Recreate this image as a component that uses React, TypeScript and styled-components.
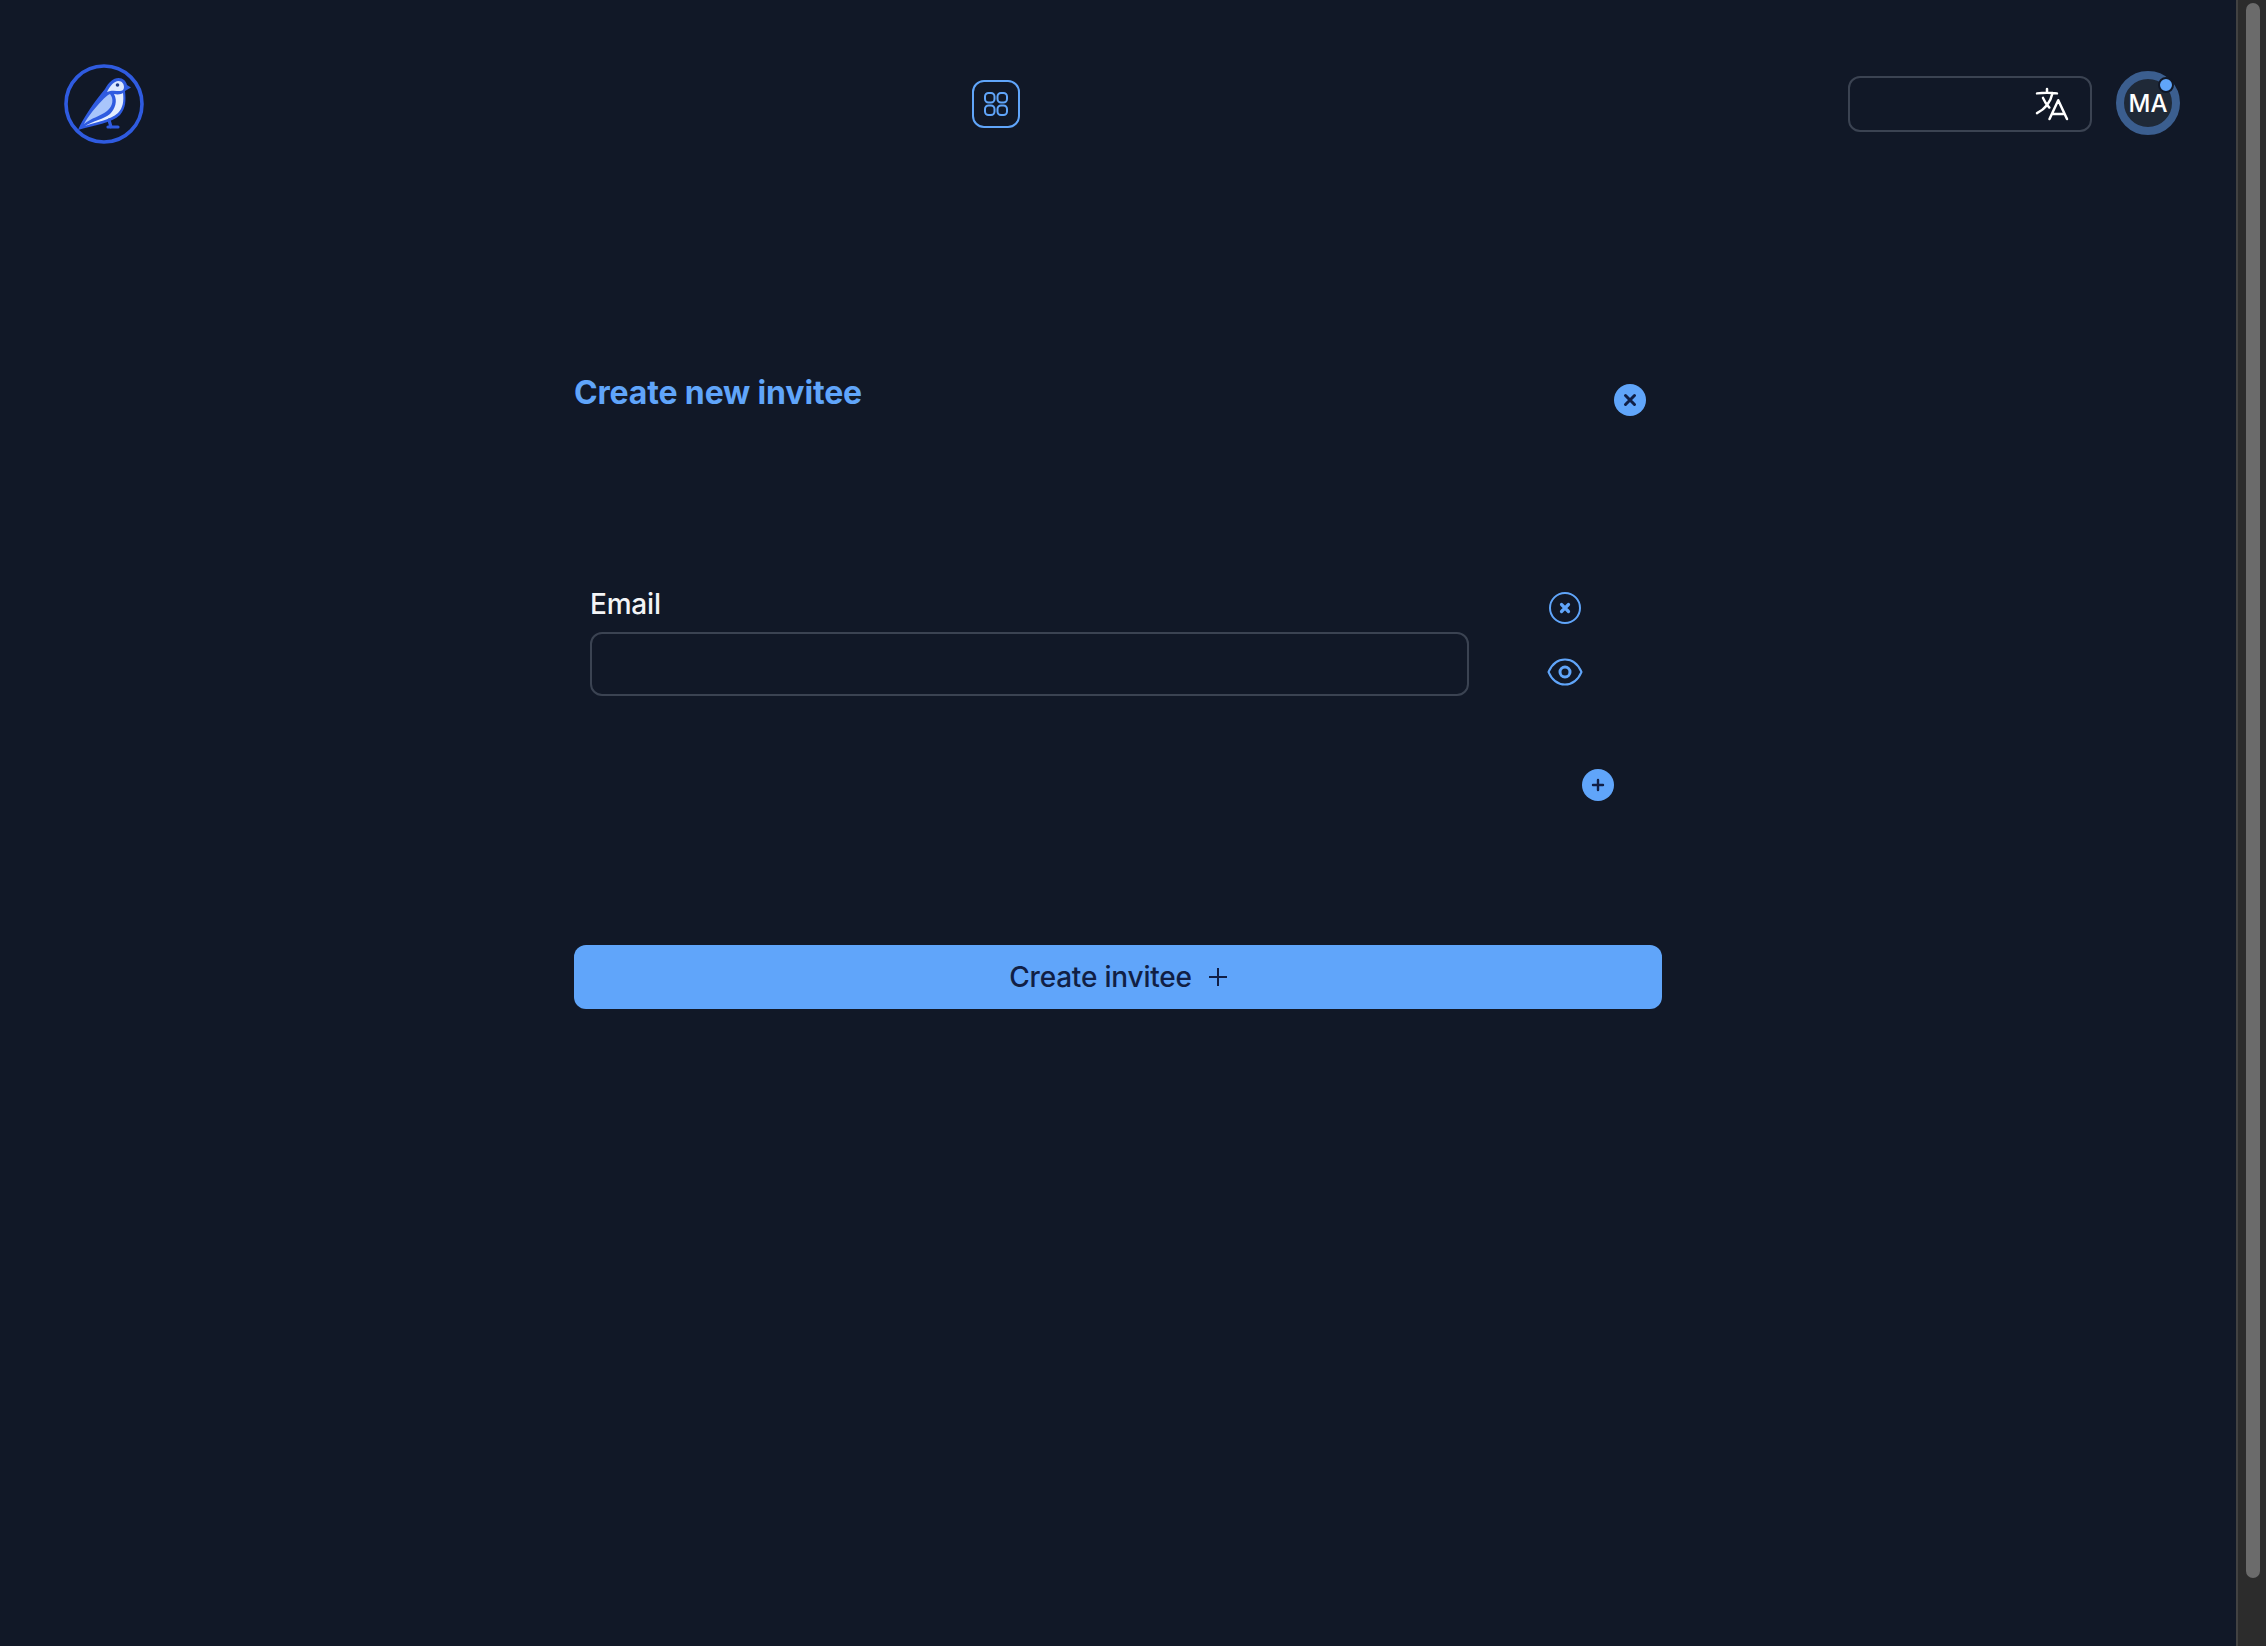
import React from "react";
import styled, { createGlobalStyle } from "styled-components";

const Global = createGlobalStyle`
  html, body { margin: 0; padding: 0; height: 100%; overflow: hidden; background: #111827; }
  body { font-family: Inter, "Noto Sans", sans-serif; }
  * { box-sizing: border-box; }
`;

const Viewport = styled.div`
  display: flex;
  width: 2266px;
  height: 1646px;
  background: #111827;
`;

const Page = styled.div`
  flex: 1;
  min-width: 0;
`;

const ScrollTrack = styled.div`
  width: 30px;
  height: 100%;
  padding: 3px 6px 68px 8px;
  background: #2c2c2c;
  border-left: 2px solid #424242;
`;

const ScrollThumb = styled.div`
  height: 100%;
  border-radius: 8px;
  background: #6b6b6b;
`;

const Header = styled.header`
  display: flex;
  align-items: center;
  justify-content: space-between;
  padding: 64px 56px 0 64px;
`;

const LogoMark = styled.svg`
  display: block;
  width: 80px;
  height: 80px;
`;

const AppsButton = styled.button`
  display: flex;
  align-items: center;
  justify-content: center;
  width: 48px;
  height: 48px;
  padding: 0;
  border: 2px solid #60a5fa;
  border-radius: 12px;
  background: transparent;
  color: #60a5fa;
`;

const HeaderRight = styled.div`
  display: flex;
  align-items: center;
  gap: 24px;
`;

const LanguageBox = styled.div`
  display: flex;
  align-items: center;
  justify-content: flex-end;
  width: 244px;
  height: 56px;
  padding-right: 18px;
  border: 2px solid #3b4352;
  border-radius: 12px;
  color: #fff;
`;

const Avatar = styled.div`
  position: relative;
  display: flex;
  align-items: center;
  justify-content: center;
  width: 64px;
  height: 64px;
  margin-bottom: 2px;
  padding-top: 2px;
  border: 8px solid #3b5e8f;
  border-radius: 50%;
  background: #1f2937;
  color: #fff;
  font-size: 24px;
  line-height: 24px;
  font-weight: 500;
`;

const AvatarDot = styled.span`
  position: absolute;
  top: -2px;
  right: -2px;
  width: 16px;
  height: 16px;
  border: 2px solid #111827;
  border-radius: 50%;
  background: #60a5fa;
`;

const Main = styled.main`
  width: 1088px;
  margin: 0 auto;
  padding-top: 233px;
`;

const TitleRow = styled.div`
  display: flex;
  align-items: flex-start;
  justify-content: space-between;
  padding-right: 16px;
`;

const Title = styled.h1`
  margin: 0;
  color: #60a5fa;
  font-size: 32px;
  line-height: 32px;
  font-weight: 700;
  letter-spacing: -0.15px;
`;

const IconDisc = styled.button`
  display: flex;
  align-items: center;
  justify-content: center;
  width: 32px;
  height: 32px;
  padding: 0;
  border: 0;
  border-radius: 50%;
  background: #60a5fa;
  color: #111f45;
`;

const CloseDisc = styled(IconDisc)`
  margin-top: 7px;
`;

const FieldRow = styled.div`
  display: flex;
  align-items: flex-start;
  margin-top: 176px;
  padding-left: 16px;
`;

const Field = styled.div`
  width: 879px;
  margin-top: -4px;
`;

const Label = styled.label`
  display: block;
  color: #f3f4f6;
  font-size: 28px;
  line-height: 32px;
  font-weight: 500;
  letter-spacing: -0.2px;
  margin-bottom: 12px;
`;

const Input = styled.input`
  display: block;
  width: 100%;
  height: 64px;
  border: 2px solid #3b4352;
  border-radius: 12px;
  background: transparent;
`;

const RowActions = styled.div`
  display: flex;
  flex-direction: column;
  align-items: center;
  width: 36px;
  gap: 34px;
  margin-left: 78px;
  color: #60a5fa;
`;

const IconSvg = styled.svg`
  display: block;
`;

const AddRow = styled.div`
  display: flex;
  justify-content: flex-end;
  margin-top: 73px;
  padding-right: 48px;
`;

const Submit = styled.button`
  display: flex;
  align-items: center;
  justify-content: center;
  gap: 17px;
  width: 100%;
  height: 64px;
  margin-top: 144px;
  border: 0;
  border-radius: 12px;
  background: #60a5fa;
  color: #111f45;
  font-family: inherit;
  font-size: 28px;
  font-weight: 500;
  letter-spacing: -0.2px;
`;

const Bird = () => (
  <LogoMark viewBox="0 0 80 80" fill="none">
    <circle cx="40" cy="40" r="38" stroke="#2f5be0" strokeWidth="3.6" />
    <path d="M14 66C19 54 31 37 41 25C45 18 49 14 54.500 14C59 14 62 17 63 21L67 23.500L61 27C62 36 62 44 56 51C48 59 30 61 14 66Z" fill="#2f5be0" />
    <path d="M43 28C46 22 50 17 54.500 17C58 17 60 20 60 23C60 26 58 27 56 27C52 27 47 26 43 28Z" fill="#dbe7ff" />
    <path d="M46 30C41 32 34 41 28 48C25 52 22 56 20 60C27 54 37 52 43 47C49 42 50 35 46 30Z" fill="#a9c5fb" />
    <path d="M50 30C54 31 58 30 59 29C60 37 59 44 54 49C46 56 32 58 21 62C29 57 40 55 46 50C51 45 54 37 50 30Z" fill="#e3edff" />
    <circle cx="53.500" cy="21" r="1.800" fill="#1d3a8a" />
    <path d="M45 56L47 63M44 63H54" stroke="#2f5be0" strokeWidth="3.200" strokeLinecap="round" strokeLinejoin="round" />
  </LogoMark>
);

const AppsIcon = () => (
  <IconSvg width="24" height="24" viewBox="0 0 24 24" fill="none" stroke="currentColor" strokeWidth="2">
    <rect x="1" y="1" width="9.500" height="9.500" rx="3.500" />
    <rect x="13.500" y="1" width="9.500" height="9.500" rx="3.500" />
    <rect x="1" y="13.500" width="9.500" height="9.500" rx="3.500" />
    <rect x="13.500" y="13.500" width="9.500" height="9.500" rx="3.500" />
  </IconSvg>
);

const LanguageIcon = () => (
  <IconSvg width="40" height="40" viewBox="0 0 24 24" fill="none" stroke="currentColor" strokeWidth="1.500" strokeLinecap="round" strokeLinejoin="round">
    <path d="m10.5 21 5.25-11.25L21 21m-9-3h7.5M3 5.621a48.474 48.474 0 0 1 6-.371m0 0c1.12 0 2.233.038 3.334.114M9 5.25V3m3.334 2.364C11.176 10.658 7.69 15.08 3 17.502m9.334-12.138c.896.061 1.785.147 2.666.257m-4.589 8.495a18.023 18.023 0 0 1-3.827-5.802" />
  </IconSvg>
);

const CrossGlyph = () => (
  <IconSvg width="14" height="14" viewBox="0 0 14 14" fill="none" stroke="currentColor" strokeWidth="3" strokeLinecap="round">
    <path d="M2.500 2.500l9 9M11.500 2.500l-9 9" />
  </IconSvg>
);

const PlusGlyph = () => (
  <IconSvg width="14" height="14" viewBox="0 0 14 14" fill="none" stroke="currentColor" strokeWidth="2.400" strokeLinecap="round">
    <path d="M7 2v10M2 7h10" />
  </IconSvg>
);

const CircleCross = () => (
  <IconSvg width="32" height="32" viewBox="0 0 32 32" fill="none" stroke="currentColor">
    <circle cx="16" cy="16" r="15" strokeWidth="2" />
    <path d="M12.500 12.500l7 7M19.500 12.500l-7 7" strokeWidth="3.200" strokeLinecap="round" />
  </IconSvg>
);

const Eye = () => (
  <IconSvg width="36" height="28" viewBox="0 0 36 28" fill="none" stroke="currentColor" strokeWidth="2">
    <path d="M1.500 14C5 6 11 1.500 18 1.500S31 6 34.500 14C31 22 25 26.500 18 26.500S5 22 1.500 14Z" />
    <circle cx="18" cy="14" r="5" strokeWidth="3" />
  </IconSvg>
);

const ThinPlus = () => (
  <IconSvg width="18" height="18" viewBox="0 0 18 18" fill="none" stroke="currentColor" strokeWidth="2">
    <path d="M9 0v18M0 9h18" />
  </IconSvg>
);

export default function App() {
  return (
    <Viewport>
      <Global />
      <Page>
        <Header>
          <Bird />
          <AppsButton aria-label="Apps"><AppsIcon /></AppsButton>
          <HeaderRight>
            <LanguageBox><LanguageIcon /></LanguageBox>
            <Avatar>MA<AvatarDot /></Avatar>
          </HeaderRight>
        </Header>
        <Main>
          <TitleRow>
            <Title>Create new invitee</Title>
            <CloseDisc aria-label="Close"><CrossGlyph /></CloseDisc>
          </TitleRow>
          <FieldRow>
            <Field>
              <Label>Email</Label>
              <Input />
            </Field>
            <RowActions>
              <CircleCross />
              <Eye />
            </RowActions>
          </FieldRow>
          <AddRow>
            <IconDisc aria-label="Add"><PlusGlyph /></IconDisc>
          </AddRow>
          <Submit>Create invitee <ThinPlus /></Submit>
        </Main>
      </Page>
      <ScrollTrack><ScrollThumb /></ScrollTrack>
    </Viewport>
  );
}
